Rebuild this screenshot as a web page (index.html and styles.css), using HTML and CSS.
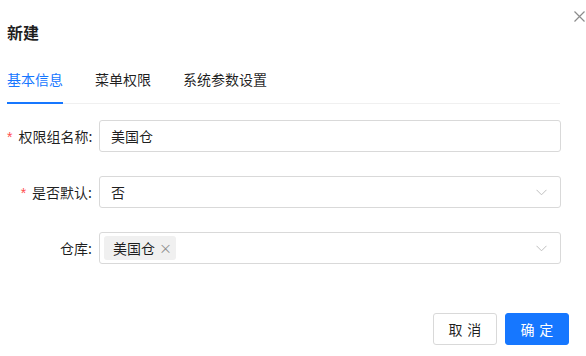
FILE: index.html
```html
<!DOCTYPE html>
<html lang="zh-CN">
<head>
    <meta charset="UTF-8">
    <title>新建</title>
    <link rel="stylesheet" href="styles.css">
</head>
<body>
    <div class="modal">
        <div class="modal-header">
            <h1 class="modal-title">新建</h1>
            <span class="modal-close">
                <svg width="11" height="11" viewBox="0 0 11 11"><path d="M0.5 0.5L10.5 10.5M10.5 0.5L0.5 10.5" stroke="#8c8c8c" stroke-width="1.2" fill="none"/></svg>
            </span>
        </div>

        <div class="tabs">
            <div class="tab active">基本信息</div>
            <div class="tab">菜单权限</div>
            <div class="tab">系统参数设置</div>
        </div>

        <form class="form">
            <div class="form-row">
                <label class="form-label"><span class="required">*</span>权限组名称:</label>
                <div class="field input">美国仓</div>
            </div>
            <div class="form-row">
                <label class="form-label"><span class="required">*</span>是否默认:</label>
                <div class="field select">
                    <span>否</span>
                    <svg class="arrow" width="11" height="7" viewBox="0 0 11 7"><path d="M0.5 0.8L5.5 5.8L10.5 0.8" stroke="#bfbfbf" stroke-width="1" fill="none"/></svg>
                </div>
            </div>
            <div class="form-row">
                <label class="form-label">仓库:</label>
                <div class="field select multi">
                    <span class="tag">美国仓<span class="tag-close">×</span></span>
                    <svg class="arrow" width="11" height="7" viewBox="0 0 11 7"><path d="M0.5 0.8L5.5 5.8L10.5 0.8" stroke="#bfbfbf" stroke-width="1" fill="none"/></svg>
                </div>
            </div>
        </form>

        <div class="modal-footer">
            <button class="btn"><span class="btn-text">取消</span></button>
            <button class="btn btn-primary"><span class="btn-text">确定</span></button>
        </div>
    </div>
</body>
</html>
```

FILE: styles.css
```css
body {
    margin: 0;
    background: #fff;
    font-family: "Noto Sans CJK SC", "Noto Sans", sans-serif;
    color: rgba(0, 0, 0, 0.88);
    font-size: 14px;
}

.modal {
    width: 586px;
    height: 356px;
    box-sizing: border-box;
    padding: 0 0 0 7px;
}

.modal-header {
    display: flex;
    justify-content: space-between;
    align-items: flex-start;
    padding-right: 1px;
    height: 56px;
}

.modal-title {
    margin: 21px 0 0;
    font-size: 16px;
    font-weight: 600;
    line-height: 22px;
}

.modal-close {
    margin-top: 11px;
    display: flex;
}

.tabs {
    display: flex;
    gap: 32px;
    width: 553px;
    border-bottom: 1px solid #f0f0f0;
}

.tab {
    padding: 12px 0;
    line-height: 22px;
    border-bottom: 2px solid transparent;
    margin-bottom: -1px;
}

.tab.active {
    color: #1677ff;
    border-bottom-color: #1677ff;
}

.form {
    margin-top: 16px;
    display: flex;
    flex-direction: column;
    gap: 24px;
}

.form-row {
    display: flex;
    align-items: center;
}

.form-label {
    width: 92px;
    padding-right: 7px;
    box-sizing: border-box;
    text-align: right;
    white-space: nowrap;
}

.required {
    color: #ff4d4f;
    margin-right: 6px;
    font-family: SimSun, "Liberation Sans", sans-serif;
}

.field {
    width: 462px;
    height: 32px;
    box-sizing: border-box;
    border: 1px solid #d9d9d9;
    border-radius: 3px;
    padding: 0 11px;
    display: flex;
    align-items: center;
    justify-content: space-between;
}

.arrow {
    margin-right: 2px;
}

.multi {
    padding-left: 4px;
}

.tag {
    background: #f0f0f0;
    border-radius: 3px;
    height: 24px;
    line-height: 24px;
    padding: 0 4px 0 9px;
    display: inline-flex;
    align-items: center;
}

.tag-close {
    color: #8c8c8c;
    margin-left: 4px;
    font-size: 13px;
}

.modal-footer {
    display: flex;
    justify-content: flex-end;
    gap: 8px;
    margin-top: 49px;
    padding-right: 17px;
}

.btn {
    width: 64px;
    height: 32px;
    border: 1px solid #d9d9d9;
    border-radius: 3px;
    background: #fff;
    font-family: inherit;
    font-size: 14px;
    color: rgba(0, 0, 0, 0.88);
    cursor: pointer;
}

.btn-text {
    letter-spacing: 0.34em;
    margin-right: -0.34em;
}

.btn-primary {
    background: #1677ff;
    border-color: #1677ff;
    color: #fff;
}
```
